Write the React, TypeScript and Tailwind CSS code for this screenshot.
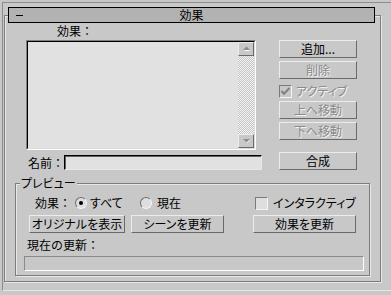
import React from "react";

const raised =
  "border border-t-[#ececec] border-l-[#ececec] border-b-[#6a6a6a] border-r-[#6a6a6a]";
const noPalt = "[font-feature-settings:normal]";

function Btn({ label, cls, disabled }: { label: string; cls: string; disabled?: boolean }) {
  return (
    <div
      className={
        "h-[18px] flex items-center justify-center bg-[#c8c8c8] " +
        raised +
        " " +
        cls +
        (disabled ? " text-[#8a8a8a] [text-shadow:1px_1px_0_#f4f4f4]" : " text-black")
      }
    >
      {label}
    </div>
  );
}

function Check({ checked, disabled }: { checked?: boolean; disabled?: boolean }) {
  return (
    <div
      className={
        "w-[13px] h-[13px] shrink-0 border border-t-[#7a7a7a] border-l-[#7a7a7a] border-b-[#f4f4f4] border-r-[#f4f4f4] flex items-center justify-center " +
        (disabled ? "bg-[#c8c8c8]" : "bg-[#dedede]")
      }
    >
      {checked && (
        <svg width="11" height="11" viewBox="0 0 11 11">
          <path d="M1.5 5 L4 7.8 L9.5 2" fill="none" stroke={disabled ? "#808080" : "#000"} strokeWidth="2" />
        </svg>
      )}
    </div>
  );
}

function Radio({ on }: { on?: boolean }) {
  return (
    <div className="w-[12px] h-[12px] shrink-0 rounded-full border border-t-[#6e6e6e] border-l-[#6e6e6e] border-b-[#f4f4f4] border-r-[#f4f4f4] bg-[#dedede] flex items-center justify-center">
      {on && <div className="w-[4px] h-[4px] rounded-full bg-black" />}
    </div>
  );
}

function Arrow({ up }: { up?: boolean }) {
  return (
    <svg width="9" height="6" viewBox="0 0 9 6">
      {up ? (
        <>
          <path d="M2 5 L5 2 L8 5 Z" fill="#ffffff" />
          <path d="M1 4 L4.5 0.5 L8 4 Z" fill="#8a8a8a" />
        </>
      ) : (
        <>
          <path d="M2 2 L5 5 L8 2 Z" fill="#ffffff" />
          <path d="M1 1 L4.5 4.5 L8 1 Z" fill="#8a8a8a" />
        </>
      )}
    </svg>
  );
}

export default function App() {
  return (
    <div className="w-[391px] h-[295px] bg-[#c8c8c8] overflow-hidden pt-[2px] pl-[2px] text-[12px] leading-[14px] text-black whitespace-nowrap [font-feature-settings:'palt'] font-['Noto_Sans_CJK_JP','Noto_Sans',sans-serif]">
      <div className="w-[400px] h-[289px] border-t border-l border-b border-t-[#8c8c8c] border-l-[#8c8c8c] border-b-[#e6e6e6] pt-[4px] pl-[1px]">
        {/* rollout */}
        <div className="w-[379px]">
          <div className="ml-[4px] w-[367px] h-[16px] relative z-10 border border-black bg-[#b2b2b2] grid grid-cols-[1fr_auto_1fr] items-center">
            <div className="pl-[7px] flex items-center">
              <div className="w-[7px] h-[1px] bg-black" />
            </div>
            <div className="leading-[14px]">効果</div>
            <div />
          </div>
          <div className="-mt-[8px] w-[377px] h-[267px] border border-[#7c7c7c] shadow-[1px_1px_0_#e8e8e8,inset_1px_1px_0_#e8e8e8] pt-[8px]">
            {/* top section */}
            <div className="flex pl-[21px]">
              <div className="w-[236px]">
                <div className={"h-[14px] pl-[31px] " + noPalt}>効果：</div>
                <div className="mt-[2px] w-[230px] h-[110px] border border-t-[#808080] border-l-[#808080] border-b-white border-r-white">
                  <div className="w-full h-full border border-t-black border-l-black border-b-[#dcdcdc] border-r-[#dcdcdc] bg-[#e1e1e1] flex justify-end">
                    <div className="w-[16px] h-full flex flex-col">
                      <div className={"h-[14px] flex items-center justify-center bg-[#c8c8c8] " + raised}>
                        <Arrow up />
                      </div>
                      <div className="flex-1 bg-[repeating-conic-gradient(#c4c4c4_0%_25%,#f4f4f4_0%_50%)] bg-[length:2px_2px]" />
                      <div className={"h-[14px] flex items-center justify-center bg-[#c8c8c8] " + raised}>
                        <Arrow />
                      </div>
                    </div>
                  </div>
                </div>
                <div className="mt-[5px] h-[15px] flex items-center">
                  <div className={"w-[38px] pl-[2px] " + noPalt}>名前：</div>
                  <div className="w-[198px] h-[15px] border border-t-black border-l-black border-b-[#e8e8e8] border-r-[#e8e8e8] shadow-[inset_1px_1px_0_#606060] bg-[#e1e1e1]" />
                </div>
              </div>
              <div className="ml-[17px] w-[78px] pt-[16px] flex flex-col">
                <Btn label="追加..." cls="w-[78px]" />
                <Btn label="削除" cls="w-[78px] mt-[3px]" disabled />
                <div className="mt-[5px] h-[14px] flex items-center">
                  <Check checked disabled />
                  <span className="ml-[4px] text-[#8a8a8a] [text-shadow:1px_1px_0_#f4f4f4]">アクティブ</span>
                </div>
                <Btn label="上へ移動" cls="w-[78px] mt-[3px]" disabled />
                <Btn label="下へ移動" cls="w-[78px] mt-[3px]" disabled />
                <Btn label="合成" cls="w-[78px] mt-[12px]" />
              </div>
            </div>

            {/* preview group */}
            <div className="mt-[13px] ml-[10px] w-[355px] h-[93px] relative border border-[#7c7c7c] shadow-[1px_1px_0_#e8e8e8,inset_1px_1px_0_#e8e8e8]">
              <div className="absolute left-[4px] -top-[8px] px-[1px] bg-[#c8c8c8]">プレビュー</div>
              <div className="mt-[12px] h-[14px] flex items-center pl-[19px]">
                <span className={"w-[40px] " + noPalt}>効果：</span>
                <Radio on />
                <span className="ml-[3px] w-[50px]">すべて</span>
                <Radio />
                <span className="ml-[5px] w-[98px]">現在</span>
                <Check />
                <span className="ml-[5px]">インタラクティブ</span>
              </div>
              <div className="mt-[5px] flex pl-[13px]">
                <Btn label="オリジナルを表示" cls="w-[96px]" />
                <Btn label="シーンを更新" cls="w-[93px] ml-[6px]" />
                <Btn label="効果を更新" cls="w-[103px] ml-[29px]" />
              </div>
              <div className={"mt-[5px] h-[14px] pl-[11px] " + noPalt}>現在の更新：</div>
              <div className="mt-[4px] ml-[8px] w-[340px] h-[15px] border border-t-[#8a8a8a] border-l-[#8a8a8a] border-b-white border-r-white" />
            </div>
          </div>
        </div>
      </div>
    </div>
  );
}
